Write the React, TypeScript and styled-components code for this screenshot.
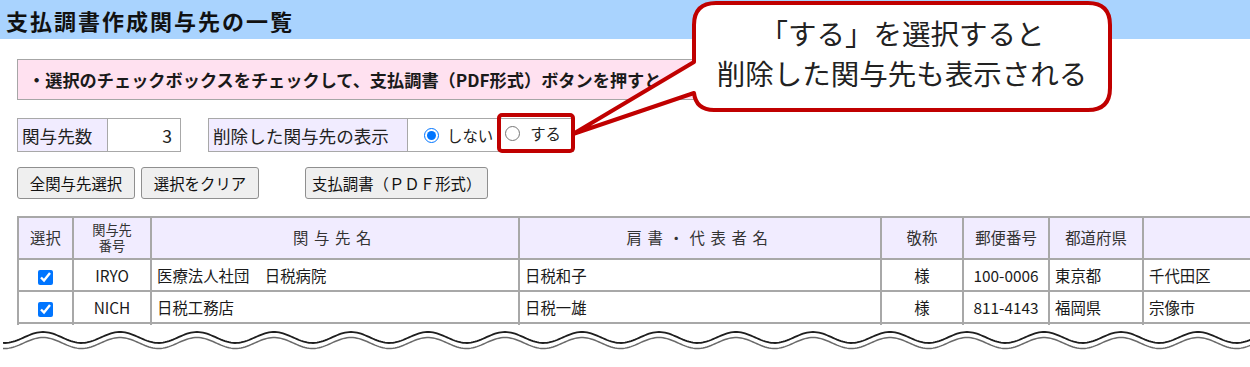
import React from "react";
import styled, { createGlobalStyle } from "styled-components";

const GlobalStyle = createGlobalStyle`
  html, body {
    margin: 0;
    padding: 0;
    background: #fff;
  }
  body {
    font-family: "Noto Sans CJK JP", "Noto Sans", sans-serif;
    color: #222;
  }
`;

const RED = "#c00000";
const LAVENDER = "#f1ecff";
const LINE = "#a8a8a8";

const Page = styled.div`
  position: relative;
  width: 1250px;
  height: 367px;
  overflow: hidden;
`;

const TitleBar = styled.h1`
  margin: 0;
  height: 39px;
  display: flex;
  align-items: center;
  padding-left: 6px;
  background: #a9d3fe;
  font-size: 22px;
  letter-spacing: 2px;
  font-weight: bold;
  color: #111;
`;

const Body = styled.div`
  display: flex;
  flex-direction: column;
  align-items: flex-start;
  padding: 20px 0 0 17px;
`;

const Notice = styled.div`
  box-sizing: border-box;
  width: 960px;
  height: 41px;
  display: flex;
  align-items: center;
  padding-left: 10px;
  border: 1px solid #a6a6a6;
  background: #ffe1f0;
  font-size: 17.2px;
  font-weight: bold;
  color: #1a1a1a;
  white-space: nowrap;
  overflow: hidden;
`;

const InfoRow = styled.div`
  display: flex;
  gap: 27px;
  margin-top: 18px;
`;

const InfoGroup = styled.div`
  display: flex;
  height: 34px;
  box-sizing: border-box;
  border: 1px solid ${LINE};
`;

const InfoLabel = styled.div<{ $w: number }>`
  box-sizing: border-box;
  width: ${(p) => p.$w}px;
  display: flex;
  align-items: center;
  padding-left: 4px;
  background: ${LAVENDER};
  border-right: 1px solid ${LINE};
  font-size: 17.6px;
`;

const InfoValue = styled.div<{ $w: number }>`
  box-sizing: border-box;
  width: ${(p) => p.$w}px;
  display: flex;
  align-items: center;
  justify-content: flex-end;
  padding-right: 8px;
  font-size: 17.6px;
`;

const RadioCell = styled.div`
  box-sizing: border-box;
  width: 165px;
  display: flex;
  align-items: center;
  padding-left: 16px;
`;

const RadioLabel = styled.label`
  display: flex;
  align-items: center;
  gap: 8px;
  font-size: 15.4px;
  color: #222;
`;

const Highlight = styled(RadioLabel)`
  height: 32px;
  margin: 0 0 4px 8px;
  padding: 0 10px 0 4px;
  gap: 10px;
  outline: 4px solid ${RED};
  border-radius: 1px;
`;

const Radio = styled.input.attrs({ type: "radio" })`
  width: 15px;
  height: 15px;
  margin: 0;
  accent-color: #0075ff;
`;

const ButtonRow = styled.div`
  display: flex;
  gap: 6px;
  margin-top: 15px;
`;

const Button = styled.button<{ $w?: number; $gapBefore?: number }>`
  box-sizing: border-box;
  width: ${(p) => (p.$w ? `${p.$w}px` : "auto")};
  height: 32px;
  padding: 0 6px;
  margin-left: ${(p) => p.$gapBefore ?? 0}px;
  background: #efefef;
  border: 1px solid #8f8f8f;
  border-radius: 3px;
  font-family: inherit;
  font-size: 15.4px;
  color: #111;
`;

const TableWrap = styled.div`
  width: 1450px;
  height: 109px;
  margin-top: 17px;
  overflow: hidden;
`;

const Table = styled.table`
  border-spacing: 0;
  table-layout: fixed;
  border: 1px solid ${LINE};
  font-size: 15.4px;
`;

const Col = styled.col<{ $w: number }>`
  width: ${(p) => p.$w}px;
`;

const Th = styled.th<{ $spaced?: boolean; $small?: boolean }>`
  height: 40px;
  padding: 0;
  border: 1px solid ${LINE};
  background: ${LAVENDER};
  font-weight: normal;
  font-size: ${(p) => (p.$small ? "13.2px" : "15.4px")};
  line-height: ${(p) => (p.$small ? "1.25" : "1.4")};
  letter-spacing: ${(p) => (p.$spaced ? "5.6px" : "0")};
  color: #333;
  text-align: center;
`;

const Td = styled.td<{ $align?: "left" | "center" }>`
  height: 30px;
  padding: 0 ${(p) => (p.$align === "left" ? "5px" : "0")};
  border: 1px solid ${LINE};
  text-align: ${(p) => p.$align ?? "center"};
  color: #1a1a1a;
  white-space: nowrap;
`;

const Check = styled.input.attrs({ type: "checkbox" })`
  width: 15px;
  height: 15px;
  margin: 0;
  vertical-align: middle;
  accent-color: #0075ff;
`;

const Wave = styled.svg`
  display: block;
  width: 1250px;
  height: 30px;
`;

const CalloutBox = styled.div`
  position: absolute;
  left: 692px;
  top: 1px;
  width: 420px;
  height: 111px;
  display: flex;
  flex-direction: column;
  align-items: center;
  justify-content: center;
  padding-bottom: 8px;
  box-sizing: border-box;
  font-size: 28.5px;
  line-height: 40px;
  color: #222;
`;

const BubbleShape = styled.svg`
  position: absolute;
  left: -130px;
  top: -1px;
  width: 560px;
  height: 150px;
  overflow: visible;
`;

const CalloutText = styled.div`
  position: relative;
  white-space: nowrap;
`;

const columns = [55, 78, 368, 362, 82, 86, 94, 300];

const rows = [
  { code: "IRYO", name: "医療法人社団　日税病院", rep: "日税和子", title: "様", zip: "100-0006", pref: "東京都", city: "千代田区" },
  { code: "NICH", name: "日税工務店", rep: "日税一雄", title: "様", zip: "811-4143", pref: "福岡県", city: "宗像市" },
];

const wavePath = (centerY: number) => {
  const pts: string[] = [];
  for (let x = 3; x <= 1252; x += 2) {
    const y = centerY - 5.5 * Math.cos((2 * Math.PI * (x - 43)) / 77);
    pts.push(`${x},${y.toFixed(2)}`);
  }
  return "M" + pts.join(" L");
};

// callout outline in page coords, shifted into the svg box
const ox = 562;
const oy = 0;
const p = (x: number, y: number) => `${x - ox} ${y - oy}`;
const bubblePath = [
  `M ${p(694, 62)}`,
  `L ${p(694, 25)}`,
  `Q ${p(694, 3)} ${p(716, 3)}`,
  `L ${p(1088, 3)}`,
  `Q ${p(1110, 3)} ${p(1110, 25)}`,
  `L ${p(1110, 88)}`,
  `Q ${p(1110, 110)} ${p(1088, 110)}`,
  `L ${p(714, 110)}`,
  `Q ${p(696, 110)} ${p(694, 93)}`,
  `L ${p(573, 134)}`,
  "Z",
].join(" ");

export default function App() {
  return (
    <Page>
      <GlobalStyle />
      <TitleBar>支払調書作成関与先の一覧</TitleBar>
      <Body>
        <Notice>・選択のチェックボックスをチェックして、支払調書（PDF形式）ボタンを押すと、支払調書を作成します。</Notice>
        <InfoRow>
          <InfoGroup>
            <InfoLabel $w={90}>関与先数</InfoLabel>
            <InfoValue $w={72}>3</InfoValue>
          </InfoGroup>
          <InfoGroup>
            <InfoLabel $w={199}>削除した関与先の表示</InfoLabel>
            <RadioCell>
              <RadioLabel>
                <Radio name="deleted" defaultChecked />
                しない
              </RadioLabel>
              <Highlight>
                <Radio name="deleted" />
                する
              </Highlight>
            </RadioCell>
          </InfoGroup>
        </InfoRow>
        <ButtonRow>
          <Button $w={118}>全関与先選択</Button>
          <Button $w={118}>選択をクリア</Button>
          <Button $gapBefore={40}>支払調書（ＰＤＦ形式）</Button>
        </ButtonRow>
        <TableWrap>
          <Table>
            <colgroup>
              {columns.map((w, i) => (
                <Col key={i} $w={w} />
              ))}
            </colgroup>
            <thead>
              <tr>
                <Th>選択</Th>
                <Th $small>
                  関与先
                  <br />
                  番号
                </Th>
                <Th $spaced>関与先名</Th>
                <Th $spaced>肩書・代表者名</Th>
                <Th>敬称</Th>
                <Th>郵便番号</Th>
                <Th>都道府県</Th>
                <Th />
              </tr>
            </thead>
            <tbody>
              {rows.map((r) => (
                <tr key={r.code}>
                  <Td>
                    <Check defaultChecked />
                  </Td>
                  <Td>{r.code}</Td>
                  <Td $align="left">{r.name}</Td>
                  <Td $align="left">{r.rep}</Td>
                  <Td>{r.title}</Td>
                  <Td>{r.zip}</Td>
                  <Td $align="left">{r.pref}</Td>
                  <Td $align="left">{r.city}</Td>
                </tr>
              ))}
              <tr>
                {columns.map((_, i) => (
                  <Td key={i} />
                ))}
              </tr>
            </tbody>
          </Table>
        </TableWrap>
      </Body>
      <Wave viewBox="0 0 1250 30">
        <path d={wavePath(12.5)} fill="none" stroke="#1e1e1e" strokeWidth={1.8} />
        <path d={wavePath(18)} fill="none" stroke="#6a6a6a" strokeWidth={1.5} />
      </Wave>
      <CalloutBox>
        <BubbleShape viewBox="0 0 560 150">
          <path d={bubblePath} fill="#fff" stroke={RED} strokeWidth={4} strokeLinejoin="round" />
        </BubbleShape>
        <CalloutText>「する」を選択すると</CalloutText>
        <CalloutText>削除した関与先も表示される</CalloutText>
      </CalloutBox>
    </Page>
  );
}
